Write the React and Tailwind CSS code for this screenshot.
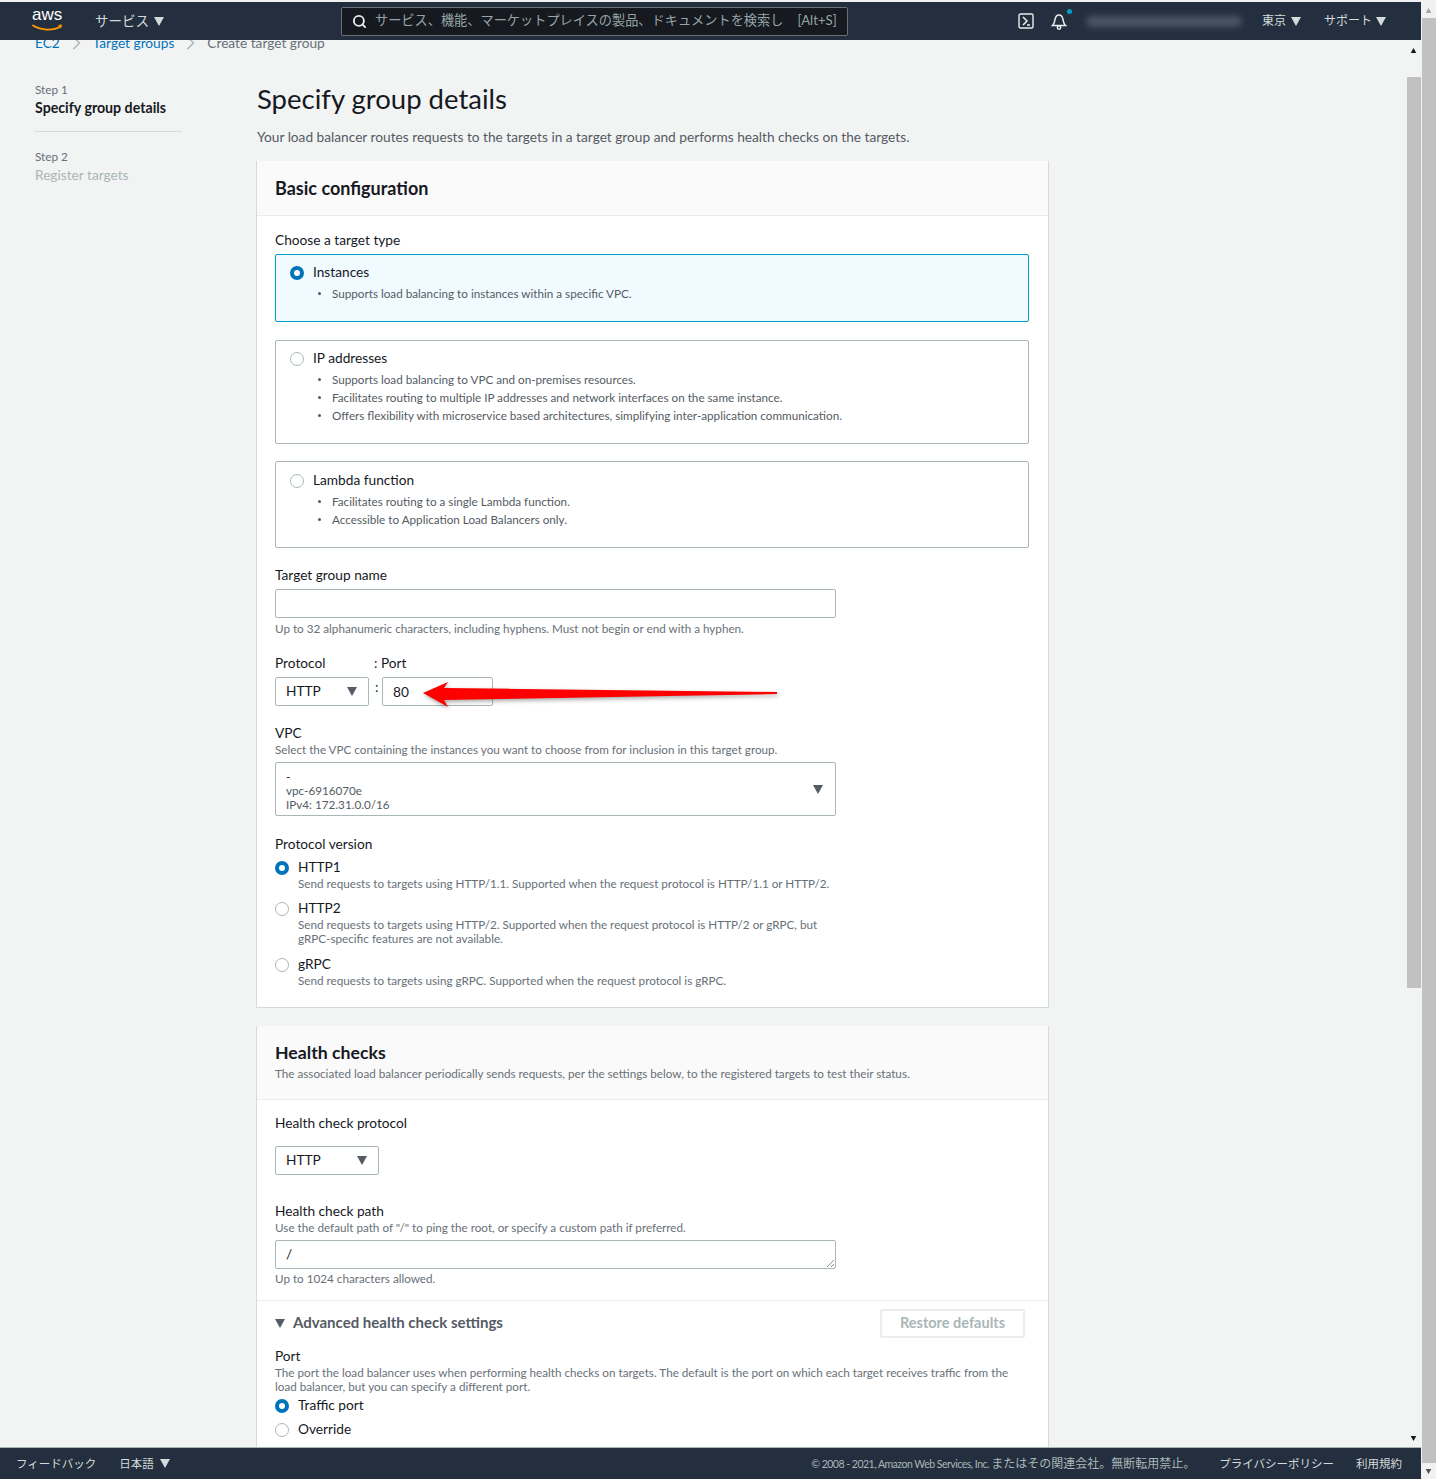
import React from "react";
import { Search } from "lucide-react";

const FONT = "font-['Lato','Noto_Sans_CJK_JP',sans-serif]";

const Caret = ({ className = "h-[9px] w-[10px]" }) => (
  <svg viewBox="0 0 10 9" className={`shrink-0 ${className}`} fill="currentColor">
    <path d="M0 0h10L5 9z" />
  </svg>
);

const Chevron = () => (
  <svg viewBox="0 0 9 14" className="mx-[12px] h-[14px] w-[9px] shrink-0" fill="none" stroke="#aab7b8" strokeWidth="1.500">
    <path d="M1.500 1l6 6-6 6" />
  </svg>
);

const Radio = ({ checked }) =>
  checked ? (
    <span className="flex h-[14px] w-[14px] shrink-0 items-center justify-center rounded-full bg-[#0073bb]">
      <span className="h-[6px] w-[6px] rounded-full bg-white" />
    </span>
  ) : (
    <span className="h-[14px] w-[14px] shrink-0 rounded-full border border-[#aab7b8] bg-white" />
  );

const TargetOption = ({ title, items, checked, className }) => (
  <div
    className={`border pl-[14px] ${className} ${
      checked ? "border-[#00a1c9] bg-[#f1faff]" : "border-[#aab7b8] bg-white"
    } rounded-[2px]`}
  >
    <div className="flex h-[18px] items-center gap-[9px] text-[13.7px] text-[#16191f]">
      <Radio checked={checked} />
      <span className="pb-[1px]">{title}</span>
    </div>
    <ul className="mt-[3px] -translate-y-[1px] pl-[42px] text-[11.7px] leading-[18px] text-[#545b64]">
      {items.map((item) => (
        <li key={item} className="relative">
          <span className="absolute left-[-14px] top-[8px] h-[3px] w-[3px] rounded-full bg-[#545b64]" />
          {item}
        </li>
      ))}
    </ul>
  </div>
);

const RadioRow = ({ checked, children, className = "" }) => (
  <div className={`flex h-[18px] items-center gap-[9px] text-[13.7px] text-[#16191f] ${className}`}>
    <Radio checked={checked} />
    <span className="pb-[1px]">{children}</span>
  </div>
);

const Hint = ({ children, className = "" }) => (
  <div className={`-translate-y-[1px] text-[11.7px] leading-[14px] text-[#687078] ${className}`}>{children}</div>
);

const VersionOption = ({ title, desc, checked, className = "" }) => (
  <div className={className}>
    <RadioRow checked={checked}>{title}</RadioRow>
    <Hint className="ml-[23px]">{desc}</Hint>
  </div>
);

const SelectBox = ({ label, className }) => (
  <div
    className={`flex h-[29px] items-center justify-between rounded-[2px] border border-[#aab7b8] bg-white pl-[10px] pr-[11px] text-[13.7px] text-[#16191f] ${className}`}
  >
    <span className="pb-[1px]">{label}</span>
    <Caret className="h-[9px] w-[10px] text-[#545b64]" />
  </div>
);

const Label = ({ children, className = "" }) => (
  <div className={`h-[18px] text-[13.7px] leading-[18px] text-[#16191f] ${className}`}>{children}</div>
);

const Header = () => (
  <header className="flex h-[40px] shrink-0 items-center border-t-2 border-t-[#f0f0f0] bg-[#232f3e] text-[#d5dbdb]">
    <div className="relative ml-[32px] h-[30px] w-[32px] shrink-0 text-white">
      <span className="absolute left-0 top-[-3px] font-['Liberation_Sans',sans-serif] text-[17px] leading-[24px]">aws</span>
      <svg viewBox="0 0 32 8" className="absolute left-0 top-[18px] h-[8px] w-[32px]" fill="none">
        <path d="M1 1.500c8 5 20 5.500 27.500 1" stroke="#f90" strokeWidth="1.800" strokeLinecap="round" />
        <path d="M26 1l4-.5-1 4z" fill="#f90" />
      </svg>
    </div>
    <div className="ml-[31px] flex items-center gap-[5px] text-[13.5px]">
      サービス
      <Caret />
    </div>
    <div className="ml-[177px] flex h-[29px] w-[507px] shrink-0 items-center rounded-[2px] border border-[#687078] bg-[#16191f] pl-[10px] text-[13.2px] text-[#95a5a6]">
      <Search size={15} strokeWidth={3} className="shrink-0 text-[#eaeded]" />
      <span className="ml-[8px] whitespace-nowrap">サービス、機能、マーケットプレイスの製品、ドキュメントを検索し</span>
      <span className="ml-[14px] whitespace-nowrap">[Alt+S]</span>
    </div>
    <svg viewBox="0 0 16 16" className="ml-[170px] h-[16px] w-[16px] shrink-0" fill="none" stroke="#eaeded" strokeWidth="1.400">
      <rect x="1" y="1" width="14" height="14" rx="1.500" />
      <path d="M5 4l4 4-4 4M9 12h3" strokeWidth="1.500" />
    </svg>
    <div className="relative ml-[17px] h-[18px] w-[16px] shrink-0">
      <svg viewBox="0 0 16 18" className="h-[18px] w-[16px]" fill="none" stroke="#eaeded" strokeWidth="1.500">
        <path d="M1.500 13.500c2-1.500 2-3.500 2.500-6 .5-3 2-4.500 4-4.500s3.500 1.500 4 4.500c.5 2.500.5 4.500 2.500 6z" />
        <circle cx="8" cy="15.500" r="1.700" />
      </svg>
      <span className="absolute right-[-5px] top-[-3px] h-[5px] w-[5px] rounded-full bg-[#00a1c9]" />
    </div>
    <div className="ml-[19px] h-[11px] w-[156px] shrink-0 rounded-full bg-[#4a5664] blur-[3px]" />
    <div className="ml-[20px] flex items-center gap-[5px] text-[12px]">
      東京
      <Caret />
    </div>
    <div className="ml-[23px] flex items-center gap-[4px] text-[12px]">
      サポート
      <Caret />
    </div>
  </header>
);

const Footer = () => (
  <footer className="flex h-[32px] shrink-0 items-center border-t border-t-[#aab7b8] bg-[#232f3e] pl-[16px] pr-[19px] text-[11.5px] text-[#d5dbdb]">
    <span>フィードバック</span>
    <span className="ml-[23px] flex items-center gap-[6px]">
      日本語
      <Caret />
    </span>
    <span className="ml-auto text-[12px] text-[#aab7b8]">
      <span className="text-[10.5px] tracking-[-0.5px]">© 2008 - 2021, Amazon Web Services, Inc. </span>
      またはその関連会社。無断転用禁止。
    </span>
    <span className="ml-[24px]">プライバシーポリシー</span>
    <span className="ml-[22px]">利用規約</span>
  </footer>
);

const Sidebar = () => (
  <aside className="w-[256px] shrink-0 pl-[35px] pt-[28px]">
    <div className="h-[18px] text-[11.7px] leading-[18px] text-[#687078]">Step 1</div>
    <div className="mt-[1px] h-[18px] text-[14.2px] font-bold leading-[18px] text-[#16191f]">Specify group details</div>
    <div className="mt-[14px] h-[1px] w-[147px] bg-[#d5dbdb]" />
    <div className="mt-[15px] h-[18px] text-[11.7px] leading-[18px] text-[#687078]">Step 2</div>
    <div className="mt-[1px] h-[18px] text-[13.7px] leading-[18px] text-[#aab7b8]">Register targets</div>
  </aside>
);

const BasicConfig = () => (
  <section className="h-[847px] w-[793px] border-b border-r border-l border-[#d5dbdb] bg-white">
    <div className="flex h-[55px] items-center border-b border-[#eaeded] bg-[#fafafa] pl-[18px] text-[18px] font-bold text-[#16191f]">
      Basic configuration
    </div>
    <div className="pl-[18px] pr-[19px] pt-[15px]">
      <Label>Choose a target type</Label>
      <TargetOption
        checked
        title="Instances"
        items={["Supports load balancing to instances within a specific VPC."]}
        className="mt-[5px] h-[68px] pt-[9px]"
      />
      <TargetOption
        title="IP addresses"
        items={[
          "Supports load balancing to VPC and on-premises resources.",
          "Facilitates routing to multiple IP addresses and network interfaces on the same instance.",
          "Offers flexibility with microservice based architectures, simplifying inter-application communication.",
        ]}
        className="mt-[18px] h-[104px] pt-[9px]"
      />
      <TargetOption
        title="Lambda function"
        items={["Facilitates routing to a single Lambda function.", "Accessible to Application Load Balancers only."]}
        className="mt-[17px] h-[87px] pt-[10px]"
      />
      <Label className="mt-[18px]">Target group name</Label>
      <input className="mt-[5px] block h-[29px] w-[561px] rounded-[2px] border border-[#aab7b8] bg-white" />
      <Hint className="mt-[4px]">Up to 32 alphanumeric characters, including hyphens. Must not begin or end with a hyphen.</Hint>
      <div className="mt-[18px] flex">
        <Label className="w-[99px]">Protocol</Label>
        <Label>: Port</Label>
      </div>
      <div className="mt-[5px] flex">
        <SelectBox label="HTTP" className="w-[94px]" />
        <span className="ml-[6px] w-[7px] text-[13.7px] leading-[20px] text-[#16191f]">:</span>
        <input
          readOnly
          value="80"
          className="block h-[29px] w-[111px] rounded-[2px] border border-[#aab7b8] bg-white pl-[10px] text-[13.7px] text-[#16191f]"
        />
      </div>
      <Label className="mt-[18px]">VPC</Label>
      <Hint className="mt-[1px]">Select the VPC containing the instances you want to choose from for inclusion in this target group.</Hint>
      <div className="mt-[5px] flex h-[54px] w-[561px] items-center justify-between rounded-[2px] border border-[#aab7b8] bg-white pl-[10px] pr-[12px]">
        <div className="pt-[1px] text-[11.7px] leading-[14px] text-[#545b64]">
          <div className="text-[#16191f]">-</div>
          <div>vpc-6916070e</div>
          <div>IPv4: 172.31.0.0/16</div>
        </div>
        <Caret className="h-[9px] w-[10px] text-[#545b64]" />
      </div>
      <Label className="mt-[19px]">Protocol version</Label>
      <VersionOption
        checked
        title="HTTP1"
        className="mt-[6px]"
        desc="Send requests to targets using HTTP/1.1. Supported when the request protocol is HTTP/1.1 or HTTP/2."
      />
      <VersionOption
        title="HTTP2"
        className="mt-[9px]"
        desc={
          <>
            Send requests to targets using HTTP/2. Supported when the request protocol is HTTP/2 or gRPC, but
            <br />
            gRPC-specific features are not available.
          </>
        }
      />
      <VersionOption
        title="gRPC"
        className="mt-[10px]"
        desc="Send requests to targets using gRPC. Supported when the request protocol is gRPC."
      />
    </div>
  </section>
);

const HealthChecks = () => (
  <section className="mt-[18px] w-[793px] border-l border-r border-[#d5dbdb] bg-white pb-[40px]">
    <div className="h-[74px] border-b border-[#eaeded] bg-[#fafafa] pl-[18px] pt-[17px]">
      <div className="h-[20px] text-[17.7px] font-bold leading-[20px] text-[#16191f]">Health checks</div>
      <Hint className="mt-[4px]">
        The associated load balancer periodically sends requests, per the settings below, to the registered targets to test their status.
      </Hint>
    </div>
    <div className="border-b border-[#eaeded] pb-[14px] pl-[18px] pt-[14px]">
      <Label>Health check protocol</Label>
      <SelectBox label="HTTP" className="mt-[14px] w-[104px]" />
      <Label className="mt-[27px]">Health check path</Label>
      <Hint className="mt-[1px]">Use the default path of "/" to ping the root, or specify a custom path if preferred.</Hint>
      <div className="relative mt-[5px] flex h-[29px] w-[561px] items-center rounded-[2px] border border-[#aab7b8] bg-white pl-[10px] text-[13.7px] text-[#16191f]">
        <span className="pb-[1px]">/</span>
        <svg viewBox="0 0 8 8" className="absolute bottom-[1px] right-[1px] h-[8px] w-[8px]" stroke="#687078" strokeWidth="0.800">
          <path d="M8 1L1 8M8 5L5 8" />
        </svg>
      </div>
      <Hint className="mt-[3px]">Up to 1024 characters allowed.</Hint>
    </div>
    <div className="pl-[18px] pr-[23px]">
      <div className="mt-[-1px] flex h-[46px] items-center justify-between">
        <div className="flex items-center gap-[8px] text-[15px] font-bold text-[#545b64]">
          <Caret className="h-[9px] w-[10px] text-[#545b64]" />
          <span className="pb-[2px]">Advanced health check settings</span>
        </div>
        <div className="flex h-[29px] w-[145px] items-center justify-center rounded-[2px] border-2 border-[#eaeded] pb-[1px] text-[14.500px] font-bold text-[#aab7b8]">
          Restore defaults
        </div>
      </div>
      <Label className="mt-[1px]">Port</Label>
      <Hint className="mt-[1px] w-[734px] leading-[13px]">
        The port the load balancer uses when performing health checks on targets. The default is the port on which each target receives traffic from the load balancer, but you can specify a different port.
      </Hint>
      <RadioRow checked className="mt-[3px]">
        Traffic port
      </RadioRow>
      <RadioRow className="mt-[6px]">Override</RadioRow>
    </div>
  </section>
);

const InnerScrollbar = () => (
  <div className="flex w-[15px] shrink-0 flex-col items-center bg-[#f2f3f3]">
    <Caret className="mt-[8px] h-[5px] w-[7px] rotate-180 text-[#16191f]" />
    <div className="mt-[24px] h-[911px] w-[14px] bg-[#c1c1c1]" />
    <Caret className="mb-[6px] mt-auto h-[5px] w-[7px] text-[#16191f]" />
  </div>
);

const OuterScrollbar = () => (
  <div className="flex w-[15px] shrink-0 flex-col items-center bg-[#f1f1f1]">
    <Caret className="mt-[8px] h-[5px] w-[7px] rotate-180 text-[#a3a3a3]" />
    <div className="mt-[5px] h-[1445px] w-[14px] bg-[#c1c1c1]" />
    <Caret className="mb-[5px] mt-auto h-[5px] w-[7px] text-[#505050]" />
  </div>
);

export default function App() {
  return (
    <div className={`flex h-[1479px] w-[1436px] overflow-hidden bg-[#f2f3f3] ${FONT}`}>
      <div className="flex w-[1421px] shrink-0 flex-col">
        <Header />
        <div className="flex min-h-0 flex-1">
          <main className="relative min-w-0 flex-1 overflow-hidden">
            <div className="mt-[-6px] flex h-[18px] items-center pl-[35px] text-[13.7px] text-[#0073bb]">
              EC2
              <Chevron />
              Target groups
              <Chevron />
              <span className="text-[#687078]">Create target group</span>
            </div>
            <div className="flex">
              <Sidebar />
              <div>
                <h1 className="ml-[1px] mt-[28px] h-[38px] text-[27.500px] leading-[38px] text-[#16191f]">Specify group details</h1>
                <p className="ml-[1px] mt-[9px] h-[20px] text-[13.7px] leading-[20px] text-[#545b64]">
                  Your load balancer routes requests to the targets in a target group and performs health checks on the targets.
                </p>
                <div className="mt-[14px]">
                  <BasicConfig />
                  <HealthChecks />
                </div>
              </div>
            </div>
            <svg viewBox="0 0 360 32" className="absolute left-[420px] top-[637px] h-[32px] w-[360px] drop-shadow-[1px_2px_2px_rgba(0,0,0,0.35)]">
              <path d="M3 16L28 5l-4 6 333 4v2L24 23l4 7z" fill="#ff0000" />
            </svg>
          </main>
          <InnerScrollbar />
        </div>
        <Footer />
      </div>
      <OuterScrollbar />
    </div>
  );
}
